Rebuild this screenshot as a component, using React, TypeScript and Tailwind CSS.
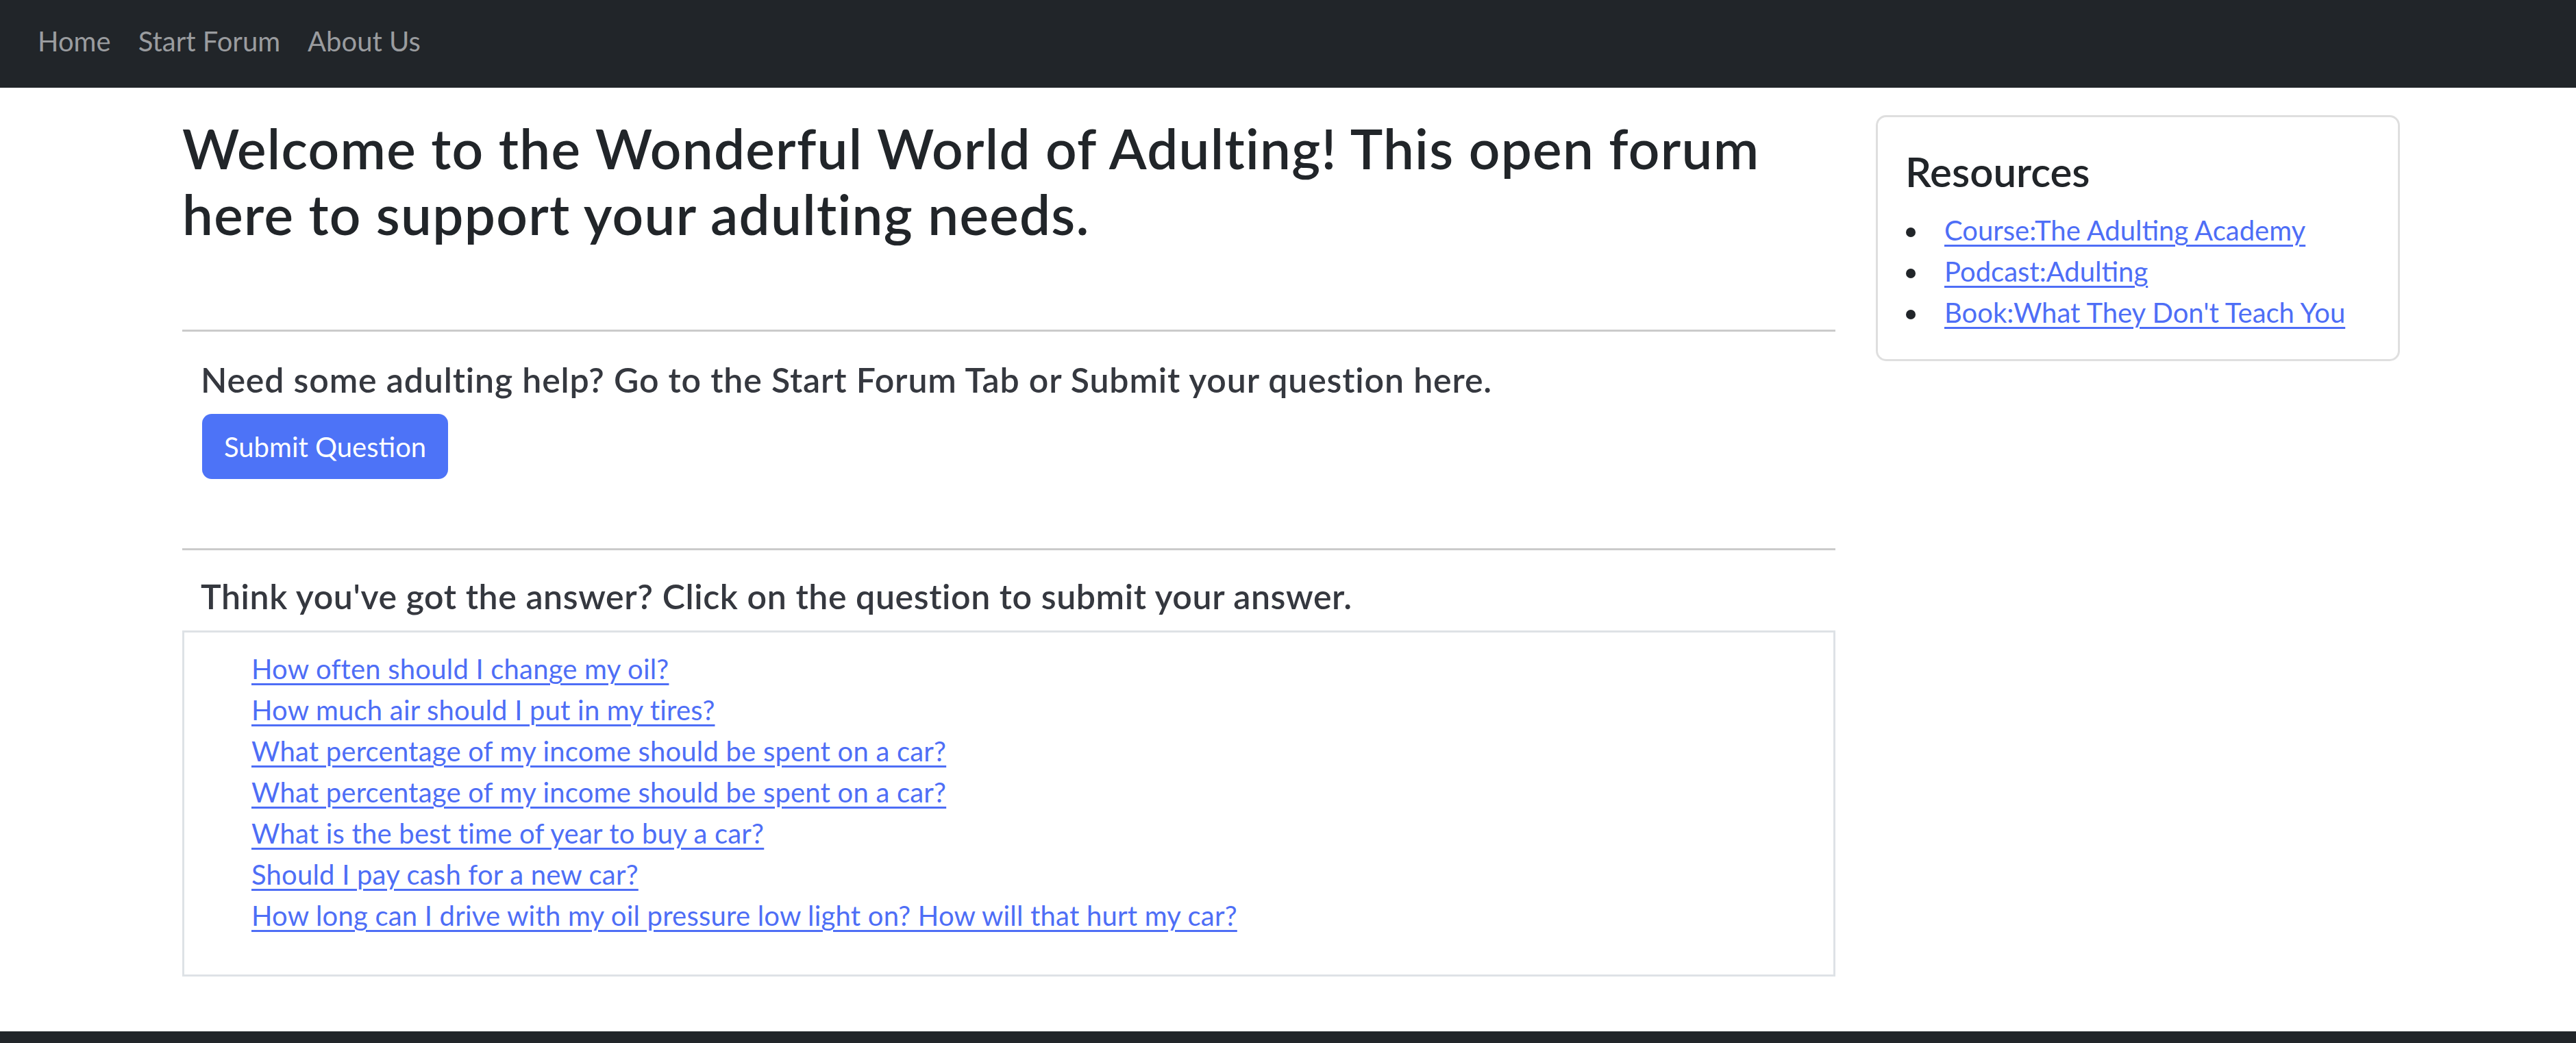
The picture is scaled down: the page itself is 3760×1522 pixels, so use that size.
const questions = [
  'How often should I change my oil?',
  'How much air should I put in my tires?',
  'What percentage of my income should be spent on a car?',
  'What percentage of my income should be spent on a car?',
  'What is the best time of year to buy a car?',
  'Should I pay cash for a new car?',
  'How long can I drive with my oil pressure low light on? How will that hurt my car?',
]

const resources = [
  'Course:The Adulting Academy',
  'Podcast:Adulting',
  "Book:What They Don't Teach You",
]

export default function App() {
  return (
    <div className="min-h-[1522px] flex flex-col bg-white font-[Lato,sans-serif] text-[40px] leading-[1.5] text-[#212529]">
      <nav className="h-[128px] shrink-0 bg-[#212529] flex items-center gap-[40px] px-[55px] pb-[8px]">
        <a href="#" className="text-[#9a9c9f]">Home</a>
        <a href="#" className="text-[#9a9c9f]">Start Forum</a>
        <a href="#" className="text-[#9a9c9f]">About Us</a>
      </nav>

      <main className="flex-1 flex items-start gap-[59px] pl-[266px] pr-[257px] pt-[40px]">
        <div className="w-[2413px] shrink-0">
          <h2 className="text-[80px] leading-[96px] font-semibold tracking-[1.3px]">
            Welcome to the Wonderful World of Adulting! This open forum here to support your adulting needs.
          </h2>

          <hr className="mt-[121px] mb-[40px] border-0 border-t-[3px] border-[#cbcbcb]" />

          <div className="pl-[27px]">
            <h5 className="text-[50px] leading-[60px] font-semibold tracking-[0.85px] text-[#35383f] mb-[20px]">
              Need some adulting help? Go to the Start Forum Tab or Submit your question here.
            </h5>
            <button className="ml-[2px] h-[95px] px-[32px] rounded-[14px] bg-[#4d73f7] text-white text-[40px] leading-[60px]">
              Submit Question
            </button>
          </div>

          <hr className="mt-[101px] mb-[37px] border-0 border-t-[3px] border-[#cbcbcb]" />

          <h5 className="pl-[27px] text-[50px] leading-[60px] font-semibold tracking-[0.6px] text-[#35383f] mb-[20px]">
            Think you've got the answer? Click on the question to submit your answer.
          </h5>

          <div className="border-[3px] border-[#dee2e6] pt-[23px] pb-[16px] px-[18px]">
            <ul className="pl-[80px] mb-[40px]">
              {questions.map((q, i) => (
                <li key={i} className="leading-[60px]">
                  <a href="#" className="text-[#4e6ef6] tracking-[0.2px] underline underline-offset-[6px] decoration-[3px]">{q}</a>
                </li>
              ))}
            </ul>
          </div>
        </div>

        <div className="w-[765px] shrink-0 border-[3px] border-[#dfdfdf] rounded-[15px] pt-[43px] pb-[38px] px-[40px]">
          <h4 className="text-[60px] leading-[72px] font-semibold mb-[20px]">Resources</h4>
          <ul className="pl-[1px]">
            {resources.map((r) => (
              <li key={r} className="flex items-center leading-[60px]">
                <span className="w-[14px] h-[14px] rounded-full bg-[#212529] shrink-0 translate-y-[3px]" />
                <a href="#" className="ml-[42px] text-[#4e6ef6] underline underline-offset-[6px] decoration-[3px]">{r}</a>
              </li>
            ))}
          </ul>
        </div>
      </main>

      <footer className="h-[17px] shrink-0 bg-[#212529]" />
    </div>
  )
}
